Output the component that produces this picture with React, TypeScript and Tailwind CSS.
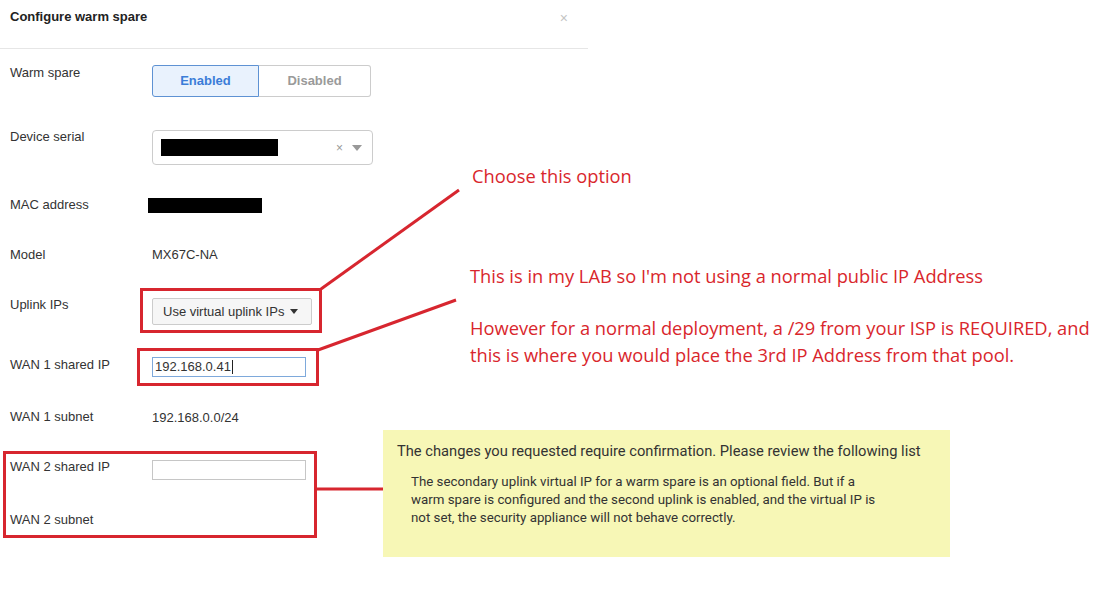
import React from 'react'

const RED = '#d7262f'

function Row({ label, height, children }: { label: string; height: number; children?: React.ReactNode }) {
  return (
    <div className="flex items-start" style={{ height }}>
      <div className="w-[152px] shrink-0 pl-[10px] pt-[7px] leading-[16px] text-[#333]">{label}</div>
      <div className="pt-[8px]">{children}</div>
    </div>
  )
}

function Annotations() {
  return (
    <>
      <svg className="pointer-events-none absolute left-0 top-0" width={1115} height={597}>
        <g fill="none" stroke={RED} strokeWidth={3}>
          <rect x={141.5} y={289.5} width={179} height={42} />
          <rect x={138.5} y={349.5} width={179} height={35} />
          <rect x={4.5} y={452.5} width={311} height={84} />
          <line x1={321} y1={289} x2={459} y2={190} />
          <line x1={318} y1={350} x2={456} y2={300} />
          <line x1={316} y1={489} x2={384} y2={489} />
        </g>
      </svg>
      <div className="absolute left-[472px] top-[162px] font-['Open_Sans',sans-serif] text-[18.3px] leading-[27px] text-[#d9262c]">
        Choose this option
      </div>
      <div className="absolute left-[470px] top-[262px] font-['Open_Sans',sans-serif] text-[18.3px] leading-[27px] text-[#d9262c]">
        <p>This is in my LAB so I'm not using a normal public IP Address</p>
        <p className="mt-[25px]">However for a normal deployment, a /29 from your ISP is REQUIRED, and</p>
        <p>this is where you would place the 3rd IP Address from that pool.</p>
      </div>
      <div className="absolute left-[383px] top-[430px] h-[127px] w-[567px] bg-[#f7f7b6] px-[14px] pt-[12px] font-['Roboto',sans-serif] text-[#333]">
        <p className="text-[14.7px] leading-[18px]">
          The changes you requested require confirmation. Please review the following list
        </p>
        <p className="mt-[13px] w-[486px] pl-[14px] text-[13.3px] leading-[18px]">
          The secondary uplink virtual IP for a warm spare is an optional field. But if a warm spare is configured and
          the second uplink is enabled, and the virtual IP is not set, the security appliance will not behave correctly.
        </p>
      </div>
    </>
  )
}

export default function App() {
  return (
    <div className="relative h-[597px] w-[1115px] overflow-hidden bg-white font-['Liberation_Sans',Arial,sans-serif] text-[13px]">
      <div className="flex w-[588px] flex-col">
        <div className="flex h-[49px] items-start justify-between border-b border-[#e6e6e6] pl-[10px] pr-[20px] pt-[9px]">
          <h1 className="text-[13px] font-bold leading-[16px] text-[#222]">Configure warm spare</h1>
          <span className="mt-[1px] text-[14px] leading-[16px] text-[#c4c4c4]">×</span>
        </div>

        <div className="flex flex-col">
          <div className="flex h-[73px] items-start">
            <div className="w-[152px] shrink-0 pl-[10px] pt-[16px] leading-[16px] text-[#333]">Warm spare</div>
            <div className="mt-[16px] flex h-[32px]">
              <button className="w-[107px] rounded-l-[3px] border border-[#5e92d3] bg-[#e9f2fd] font-bold text-[#3b7dd8]">
                Enabled
              </button>
              <button className="w-[112px] rounded-r-[3px] border border-l-0 border-[#cccccc] bg-white font-bold text-[#9a9a9a]">
                Disabled
              </button>
            </div>
          </div>

          <Row label="Device serial" height={68}>
            <div className="flex h-[35px] w-[221px] items-center rounded-[4px] border border-[#cccccc] bg-white pl-[8px] pr-[10px]">
              <div className="h-[17px] w-[117px] bg-black" />
              <span className="ml-auto text-[12px] text-[#999]">×</span>
              <svg className="ml-[9px]" width={10} height={6} viewBox="0 0 10 6">
                <path d="M0 0 L10 0 L5 6 Z" fill="#999" />
              </svg>
            </div>
          </Row>

          <Row label="MAC address" height={50}>
            <div className="-ml-[4px] h-[15px] w-[114px] bg-black" />
          </Row>

          <Row label="Model" height={50}>
            <div className="-mt-[1px] leading-[16px] text-[#333]">MX67C-NA</div>
          </Row>

          <Row label="Uplink IPs" height={60}>
            <button className="flex h-[27px] w-[160px] items-center rounded-[2px] border border-[#cccccc] bg-[#f6f6f6] pl-[10px] text-[#333]">
              Use virtual uplink IPs
              <svg className="ml-[6px]" width={8} height={5} viewBox="0 0 8 5">
                <path d="M0 0 L8 0 L4 5 Z" fill="#333" />
              </svg>
            </button>
          </Row>

          <Row label="WAN 1 shared IP" height={52}>
            <div className="-mt-[1px] flex h-[20px] w-[154px] items-center border border-[#7ea9db] bg-white pl-[2px] text-[#333]">
              192.168.0.41<span className="ml-[1px] h-[14px] w-px bg-[#222]" />
            </div>
          </Row>

          <Row label="WAN 1 subnet" height={50}>
            <div className="leading-[16px] text-[#333]">192.168.0.0/24</div>
          </Row>

          <Row label="WAN 2 shared IP" height={53}>
            <div className="h-[20px] w-[154px] border border-[#c6c6c6] bg-white" />
          </Row>

          <Row label="WAN 2 subnet" height={40} />
        </div>
      </div>

      <Annotations />
    </div>
  )
}
